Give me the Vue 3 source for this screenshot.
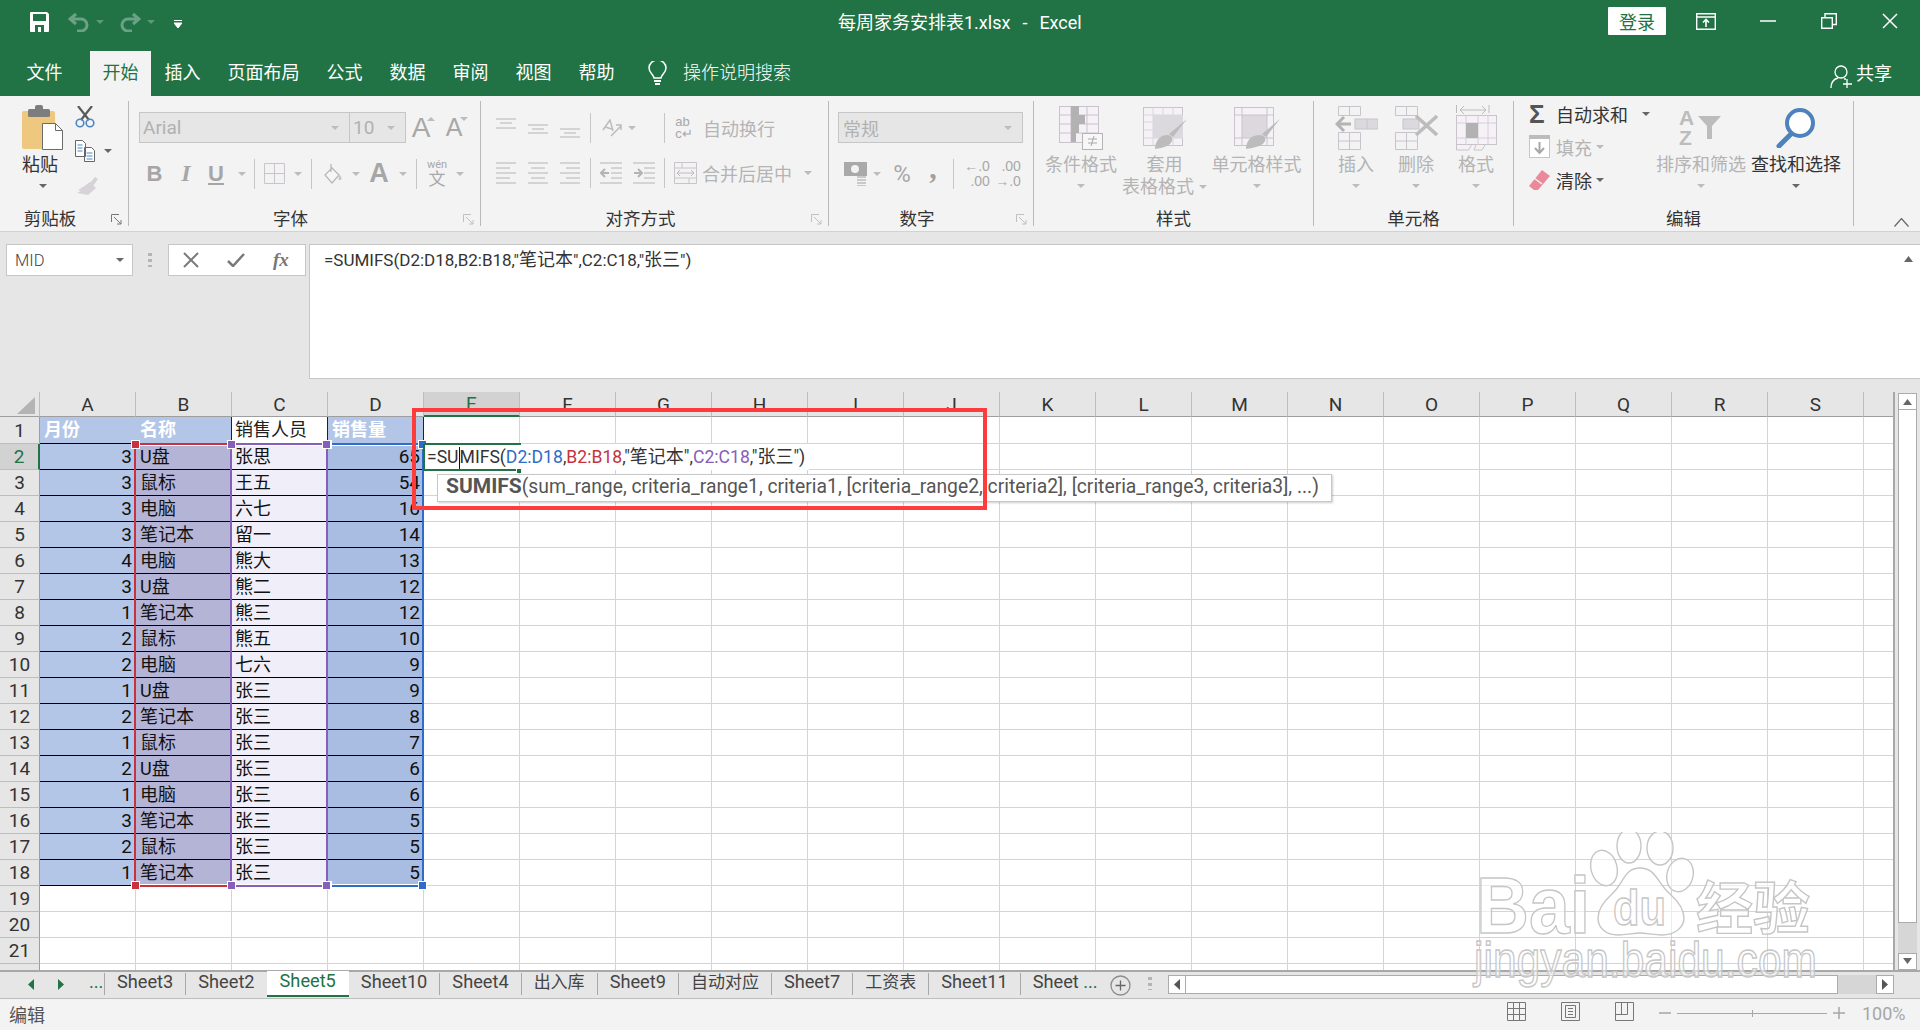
<script setup>
const colNames = 'ABCDEFGHIJKLMNOPQRS'.split('').concat('')
const rowCount = 22

const data = [
  [3, 'U盘', '张思', 65], [3, '鼠标', '王五', 54], [3, '电脑', '六七', 16], [3, '笔记本', '留一', 14],
  [4, '电脑', '熊大', 13], [3, 'U盘', '熊二', 12], [1, '笔记本', '熊三', 12], [2, '鼠标', '熊五', 10],
  [2, '电脑', '七六', 9], [1, 'U盘', '张三', 9], [2, '笔记本', '张三', 8], [1, '鼠标', '张三', 7],
  [2, 'U盘', '张三', 6], [1, '电脑', '张三', 6], [3, '笔记本', '张三', 5], [2, '鼠标', '张三', 5],
  [1, '笔记本', '张三', 5]
]
const head = ['月份', '名称', '销售人员', '销售量']

function cellText(r, c) {
  if (c > 3 || r > 18) return ''
  return r === 1 ? head[c] : data[r - 2][c]
}
function cellClass(r, c) {
  if (c > 3 || r > 18) return 'cell'
  if (r === 1) return ['cell', 'hd', 'hd' + c]
  return ['cell', 'd', 'd' + c]
}

const tabs = ['Sheet3', 'Sheet2', 'Sheet5', 'Sheet10', 'Sheet4', '出入库', 'Sheet9', '自动对应', 'Sheet7', '工资表', 'Sheet11']
const menu = ['开始', '插入', '页面布局', '公式', '数据', '审阅', '视图', '帮助']
</script>

<template>
  <div class="app">
    <!-- title bar -->
    <div class="titlebar">
      <div class="qat">
        <svg width="20" height="20" viewBox="0 0 20 20"><path d="M1 0h16l2 2v17a1 1 0 0 1-1 1H1a1 1 0 0 1-1-1V1a1 1 0 0 1 1-1z" fill="#fff"/><rect x="3" y="2" width="13" height="7" fill="#217346"/><rect x="5" y="13" width="9" height="7" fill="#217346"/><rect x="8" y="15" width="3" height="5" fill="#fff"/></svg>
        <svg class="undo" width="22" height="20" viewBox="0 0 22 20"><path d="M8 2 2 7l6 5M2 7h11a6 6 0 0 1 0 12H9" fill="none" stroke="#6ba285" stroke-width="3"/></svg>
        <i class="dd faded"></i>
        <svg class="redo" width="22" height="20" viewBox="0 0 22 20"><path d="m14 2 6 5-6 5M20 7H9a6 6 0 0 0 0 12h4" fill="none" stroke="#6ba285" stroke-width="3"/></svg>
        <i class="dd faded"></i>
        <svg class="custom" width="8" height="9" viewBox="0 0 8 9"><path d="M0 .5h8M0 3h8L4 8z" fill="#fff" stroke="#fff" stroke-width="1"/></svg>
      </div>
      <div class="doc-title">每周家务安排表1.xlsx<span class="dash">-</span>Excel</div>
      <div class="win">
        <button class="login">登录</button>
        <svg class="w-display" width="20" height="17" viewBox="0 0 20 17"><path d="M.7.7h18.6v15.6H.7zM1 4h18" fill="none" stroke="#fff" stroke-width="1.4"/><path d="M10 14V7M7 9.5 10 6.500l3 3" fill="none" stroke="#fff" stroke-width="1.6"/></svg>
        <svg class="w-min" width="16" height="2" viewBox="0 0 16 2"><path d="M0 1h16" stroke="#fff" stroke-width="1.5"/></svg>
        <svg class="w-max" width="16" height="16" viewBox="0 0 16 16"><path d="M.7 4.700h10.600v10.600H.7zM4 4.500V.7h11.300v10.800H11.500" fill="none" stroke="#fff" stroke-width="1.400"/></svg>
        <svg class="w-close" width="16" height="16" viewBox="0 0 16 16"><path d="m1 1 14 14M15 1 1 15" stroke="#fff" stroke-width="1.500"/></svg>
      </div>
    </div>

    <!-- menu tabs -->
    <div class="menubar">
      <span class="mtab file">文件</span>
      <span v-for="(m, i) in menu" :key="m" class="mtab" :class="{ active: i === 0 }">{{ m }}</span>
      <svg class="bulb" width="19" height="24" viewBox="0 0 19 24"><path d="M6 17c0-3-5-5-5-10a8.500 8 0 0 1 17 0c0 5-5 7-5 10z" fill="none" stroke="#fff" stroke-width="1.500"/><path d="M6 20h7M7 23h5" stroke="#fff" stroke-width="2"/></svg>
      <span class="tell">操作说明搜索</span>
      <span class="share">
        <svg width="24" height="24" viewBox="0 0 24 24"><circle cx="11" cy="7" r="6" fill="none" stroke="#fff" stroke-width="1.300"/><path d="M1 23c0-6 3-9 7-10M14 14h2M17 14v9M13 19h9" fill="none" stroke="#fff" stroke-width="1.300"/></svg>
        共享
      </span>
    </div>

    <!-- ribbon -->
    <div class="ribbon">
      <section class="group" style="width: 129px">
        <div class="g-body clip">
          <div class="big" style="width: 60px">
            <div class="big-ico">
              <svg width="42" height="45" viewBox="0 0 42 45"><rect y="6" width="33" height="38" rx="2" fill="#edc87e"/><rect x="6" y="4" width="22" height="8" rx="1.500" fill="#7d7d7d"/><rect x="13" y="0" width="8" height="6" rx="2" fill="#7d7d7d"/><path d="M20.500 18.500h13l7 7v19h-20z" fill="#fff" stroke="#6b6b6b"/><path d="M33.500 18.500v7h7" fill="none" stroke="#6b6b6b"/></svg>
            </div>
            <span class="dark paste-l">粘贴</span>
            <i class="dd"></i>
          </div>
          <div class="clip-tools">
            <svg width="20" height="22" viewBox="0 0 20 22"><path d="M3 0 14 14M17 0 6 14" stroke="#5a5a5a" stroke-width="2.200"/><circle cx="5" cy="17" r="3.800" fill="none" stroke="#4a86c5" stroke-width="1.600"/><circle cx="15" cy="17" r="3.800" fill="none" stroke="#4a86c5" stroke-width="1.600"/></svg>
            <div class="copy-row">
              <svg width="20" height="22" viewBox="0 0 20 22"><path d="M.5.500h7l3 3v13H.5zM9.500 7.500h7l3 3v11h-10z" fill="#fff" stroke="#666"/><path d="M2.500 5h5M2.500 8h5M2.500 11h5M11.500 13h6M11.500 16h6M11.500 19h6" stroke="#4a86c5"/></svg>
              <i class="dd"></i>
            </div>
            <svg width="24" height="21" viewBox="0 0 24 21"><path d="m15 9 5-6 3 2-5 7zM15 8l6 6-8 7-11-2 4-2-3-1 5-3z" fill="#d6d2d8"/></svg>
          </div>
        </div>
        <div class="g-foot"><span class="g-label">剪贴板</span><span class="launch"><svg width="11" height="11" viewBox="0 0 11 11"><path d="M.5 8V.5H8M3 3l7 7M10 6v4H6" fill="none" stroke="#777"/></svg></span></div>
      </section>

      <section class="group" style="width: 352px">
        <div class="g-body font">
          <div class="f-row1">
            <div class="combo" style="width: 211px"><span>Arial</span><i class="dd light"></i></div>
            <div class="combo nl" style="width: 56px"><span>10</span><i class="dd light"></i></div>
            <span class="grow up">A<i class="dd up-t"></i></span>
            <span class="grow down">A<i class="dd light"></i></span>
          </div>
          <div class="irow f-row2">
            <b class="gl">B</b>
            <i class="gl ser">I</i>
            <u class="gl">U</u>
            <i class="dd light"></i>
            <i class="sep"></i>
            <svg width="21" height="21" viewBox="0 0 21 21"><path d="M.5.500h20v20H.5zM10.500.500v20M.5 10.500h20" fill="none" stroke="#c9c4cc"/></svg>
            <i class="dd light"></i>
            <i class="sep"></i>
            <svg width="19" height="22" viewBox="0 0 19 22"><path d="M8 5 1 12l7 8 7-8zM7 1v8" fill="#f6f6f6" stroke="#b8b8b8" stroke-width="1.300"/><path d="M16 12c2 3 2 5 0 5s-2-2 0-5z" fill="#c9c4cc"/></svg>
            <i class="dd light"></i>
            <span class="gl big-a">A</span>
            <i class="dd light"></i>
            <i class="sep"></i>
            <span class="wen"><small>wén</small><span>文</span></span>
            <i class="dd light"></i>
          </div>
        </div>
        <div class="g-foot"><span class="g-label">字体</span><span class="launch"><svg width="11" height="11" viewBox="0 0 11 11"><path d="M.5 8V.5H8M3 3l7 7M10 6v4H6" fill="none" stroke="#c0c0c0"/></svg></span></div>
      </section>

      <section class="group" style="width: 348px">
        <div class="g-body align">
          <div class="irow a-row1">
            <svg width="20" height="22" viewBox="0 0 20 22"><path d="M0 2h20M4 6h12M0 11h20" stroke="#b4b4b4"/></svg>
            <svg width="20" height="22" viewBox="0 0 20 22"><path d="M0 8h20M4 12h12M0 16h20" stroke="#b4b4b4"/></svg>
            <svg width="20" height="22" viewBox="0 0 20 22"><path d="M0 12h20M4 16h12M0 20h20" stroke="#b4b4b4"/></svg>
            <i class="sep"></i>
            <svg width="21" height="18" viewBox="0 0 21 18"><path d="M2 11 9 1l3 11M4 8l7 2M10 17 20 7M15 6h5v5" fill="none" stroke="#bcbcbc" stroke-width="1.500"/></svg>
            <i class="dd light"></i>
            <i></i>
            <i class="sep"></i>
            <span class="abc">ab<br>c↵</span>
            <span class="off txt">自动换行</span>
          </div>
          <div class="irow a-row2">
            <svg width="20" height="22" viewBox="0 0 20 22"><path d="M0 1h20M0 6h14M0 11h20M0 16h14M0 21h20" stroke="#b4b4b4"/></svg>
            <svg width="20" height="22" viewBox="0 0 20 22"><path d="M0 1h20M3 6h14M0 11h20M3 16h14M0 21h20" stroke="#b4b4b4"/></svg>
            <svg width="20" height="22" viewBox="0 0 20 22"><path d="M0 1h20M6 6h14M0 11h20M6 16h14M0 21h20" stroke="#b4b4b4"/></svg>
            <i class="sep"></i>
            <svg width="22" height="22" viewBox="0 0 22 22"><path d="M0 1h22M11 6h11M11 11h11M11 16h11M0 21h22" stroke="#b4b4b4"/><path d="M1 11h8M5 7l-4 4 4 4" fill="none" stroke="#b4b4b4" stroke-width="2"/></svg>
            <svg width="22" height="22" viewBox="0 0 22 22"><path d="M0 1h22M11 6h11M11 11h11M11 16h11M0 21h22" stroke="#b4b4b4"/><path d="M1 11h8M5 7l4 4-4 4" fill="none" stroke="#b4b4b4" stroke-width="2"/></svg>
            <i class="sep"></i>
            <svg width="23" height="22" viewBox="0 0 23 22"><path d="M.5.500h22v21H.5zM.5 6h22M.5 16h22M8 .5V6M15 16v5.500" fill="none" stroke="#c9c4cc"/><path d="M3 11h17M6 8l-3 3 3 3M17 8l3 3-3 3" fill="none" stroke="#bcbcbc"/></svg>
            <span class="off txt">合并后居中</span>
            <i class="dd light"></i>
          </div>
        </div>
        <div class="g-foot"><span class="g-label">对齐方式</span><span class="launch"><svg width="11" height="11" viewBox="0 0 11 11"><path d="M.5 8V.5H8M3 3l7 7M10 6v4H6" fill="none" stroke="#c0c0c0"/></svg></span></div>
      </section>

      <section class="group" style="width: 205px">
        <div class="g-body number">
          <div class="combo wide" style="width: 185px"><span class="cjk-t">常规</span><i class="dd light"></i></div>
          <div class="irow n-row2">
            <svg width="23" height="24" viewBox="0 0 23 24"><rect width="23" height="14" fill="#a9a9a9"/><circle cx="11" cy="7" r="4" fill="#f3f3f3"/><path d="M13 15h9M13 18h9M13 21h9M13 24h9" stroke="#c9c9c9" stroke-width="2"/></svg>
            <i class="dd light"></i>
            <span class="pct">%</span>
            <span class="comma">,</span>
            <i class="sep"></i>
            <span class="dec">←.0<br>.00</span>
            <span class="dec">.00<br>→.0</span>
          </div>
        </div>
        <div class="g-foot"><span class="g-label">数字</span><span class="launch"><svg width="11" height="11" viewBox="0 0 11 11"><path d="M.5 8V.5H8M3 3l7 7M10 6v4H6" fill="none" stroke="#c0c0c0"/></svg></span></div>
      </section>

      <section class="group" style="width: 280px">
        <div class="g-body styles">
          <div class="big" style="width: 72px">
            <div class="big-ico">
              <svg width="44" height="44" viewBox="0 0 44 44"><rect x=".5" y=".5" width="39" height="36" fill="#f5f1f7" stroke="#c9c4cc"/><path d="M.5 9h39M.5 18h39M.5 27h39M12 .5v36M28 .5v36" stroke="#c9c4cc"/><path d="M12 0h8v9h6v9h-6v9h-3v9h-5z" fill="#b2b2b2"/><rect x="23.500" y="27.500" width="20" height="16" fill="#f7f7f7" stroke="#b4b4b4"/><path d="M29 37h9M29 33h9M35 30l-3 10" stroke="#a9a9a9"/></svg>
            </div>
            <span class="off">条件格式</span>
            <i class="dd light"></i>
          </div>
          <div class="big" style="width: 87px; margin-left: 4px">
            <div class="big-ico">
              <svg width="44" height="42" viewBox="0 0 44 42"><rect x=".5" y=".5" width="39" height="38" fill="#f5f1f7" stroke="#c9c4cc"/><path d="M.5 8h39M.5 15h39M.5 23h39M.5 31h39M10 .5v38M20 .5v38M30 .5v38" stroke="#d9d5dc"/><rect x="10" y="8" width="30" height="23" fill="#dcd9de"/><path d="m44 12-14 18-4-3z" fill="#bcbcbc"/><path d="M12 42c0-8 5-14 12-14 4 0 6 3 5 6-2 5-9 7-17 8z" fill="#bcbcbc"/></svg>
            </div>
            <span class="off">套用</span>
            <span class="off tight">表格格式<i class="dd light"></i></span>
          </div>
          <div class="big" style="width: 91px; margin-left: 3px">
            <div class="big-ico">
              <svg width="46" height="42" viewBox="0 0 46 42"><rect x=".5" y=".5" width="39" height="38" fill="#f5f1f7" stroke="#c9c4cc"/><rect x="8" y="8" width="25" height="23" fill="#dcd9de"/><path d="M.5 8h39M.5 31h39M8 .5v38M33 .5v38" stroke="#c9c4cc"/><path d="m46 12-14 18-4-3z" fill="#bcbcbc"/><path d="M12 42c0-8 5-14 14-14 4 0 6 3 5 6-2 5-11 7-19 8z" fill="#bcbcbc"/></svg>
            </div>
            <span class="off">单元格样式</span>
            <i class="dd light"></i>
          </div>
        </div>
        <div class="g-foot solo"><span class="g-label">样式</span></div>
      </section>

      <section class="group" style="width: 200px">
        <div class="g-body cells">
          <div class="big" style="width: 60px">
            <div class="big-ico">
              <svg width="43" height="44" viewBox="0 0 43 44"><path d="M3.500.5h22v9h-22zM14.500.5v9M3.500 26.500h22v17h-22zM14.500 26.500v17M3.500 35h22" fill="none" stroke="#c9c4cc"/><rect x="20" y="13" width="23" height="10" fill="#dcd9de" stroke="#c9c4cc"/><path d="M32 13v10" stroke="#c9c4cc"/><path d="M16 18H3M9 11l-7 7 7 7" fill="none" stroke="#b4b4b4" stroke-width="3"/></svg>
            </div>
            <span class="off">插入</span>
            <i class="dd light"></i>
          </div>
          <div class="big" style="width: 60px">
            <div class="big-ico">
              <svg width="43" height="44" viewBox="0 0 43 44"><path d="M.5.500h22v9H.5zM11.500.5v9M.5 26.500h22v17H.5zM11.500 26.500v17M.5 35h22" fill="none" stroke="#c9c4cc"/><rect x="8" y="13" width="16" height="10" fill="#dcd9de" stroke="#c9c4cc"/><path d="m21 10 21 19M42 10 21 29" fill="none" stroke="#bcbcbc" stroke-width="3.500"/></svg>
            </div>
            <span class="off">删除</span>
            <i class="dd light"></i>
          </div>
          <div class="big" style="width: 60px">
            <div class="big-ico">
              <svg width="41" height="46" viewBox="0 0 41 46"><path d="M.5 0v8M33 0v8M4 5h26M8 1 4 5l4 4M26 1l4 4-4 4" fill="none" stroke="#bcbcbc"/><rect x=".5" y="10.500" width="40" height="29" fill="#f5f1f7" stroke="#c9c4cc"/><path d="M.5 18h40M.5 33h40M10 10.500v29M22 10.500v29M32 10.500v29" stroke="#d5d0d8"/><rect x="10" y="18" width="12" height="15" fill="#b2b2b2"/><path d="M.5 40v5h12l3-5M20 40l-2 5h8l3-5" fill="none" stroke="#c9c4cc"/></svg>
            </div>
            <span class="off">格式</span>
            <i class="dd light"></i>
          </div>
        </div>
        <div class="g-foot solo"><span class="g-label">单元格</span></div>
      </section>

      <section class="group" style="width: 340px">
        <div class="g-body edit">
          <div class="stack">
            <div class="srow">
              <span class="sigma">Σ</span><span class="dark">自动求和</span><i class="dd first"></i>
            </div>
            <div class="srow">
              <svg width="21" height="23" viewBox="0 0 21 23"><rect x=".5" y=".5" width="20" height="22" fill="#fff" stroke="#c6c6c6"/><rect width="21" height="4" fill="#bcbcbc"/><path d="M10.500 7v11M6 13l4.500 5 4.500-5" fill="none" stroke="#a8a8a8" stroke-width="2"/></svg>
              <span class="off">填充</span><i class="dd light"></i>
            </div>
            <div class="srow">
              <svg width="21" height="20" viewBox="0 0 21 20"><path d="M13 0l8 6L9 20H5l-5-4z" fill="#e98a9b"/><path d="m5 8 8 6" stroke="#f3f3f3" stroke-width="1.500"/></svg>
              <span class="dark">清除</span><i class="dd"></i>
            </div>
          </div>
          <div class="big" style="width: 92px">
            <div class="big-ico sort-ico">
              <span class="az">A<br>Z</span>
              <svg width="23" height="23" viewBox="0 0 23 23"><path d="M0 0h23l-9 10v13H9V10z" fill="#bcbcbc"/></svg>
            </div>
            <span class="off">排序和筛选</span>
            <i class="dd light"></i>
          </div>
          <div class="big" style="width: 92px; margin-left: 3px">
            <div class="big-ico">
              <svg width="40" height="40" viewBox="0 0 40 40"><circle cx="24" cy="15" r="13" fill="#fff" stroke="#4d82bd" stroke-width="4"/><path d="m15 26-12 12" stroke="#4d82bd" stroke-width="5" stroke-linecap="round"/></svg>
            </div>
            <span class="dark">查找和选择</span>
            <i class="dd"></i>
          </div>
        </div>
        <div class="g-foot solo"><span class="g-label">编辑</span></div>
      </section>

      <svg class="collapse" width="15" height="9" viewBox="0 0 15 9"><path d="m.5 8.500 7-8 7 8" fill="none" stroke="#666" stroke-width="1.200"/></svg>
    </div>

    <!-- formula bar -->
    <div class="formulabar">
      <div class="namebox"><span>MID</span><i class="dd"></i></div>
      <div class="grip"></div>
      <div class="fx-buttons">
        <svg width="16" height="16" viewBox="0 0 16 16"><path d="m1 1 14 14M15 1 1 15" stroke="#7a7a7a" stroke-width="2"/></svg>
        <svg width="18" height="14" viewBox="0 0 18 14"><path d="m1 8 5 5L17 1" fill="none" stroke="#7a7a7a" stroke-width="2.500"/></svg>
        <span class="fx">fx</span>
      </div>
      <div class="fx-input">
        <span class="fx-text">=SUMIFS(D2:D18,B2:B18,"<span class="c">笔记本</span>",C2:C18,"<span class="c">张三</span>")</span>
        <svg class="fx-up" width="9" height="6" viewBox="0 0 9 6"><path d="M0 6 4.500 0 9 6z" fill="#666"/></svg>
      </div>
    </div>

    <!-- sheet -->
    <div class="main">
      <div class="sheet">
        <div class="grid">
          <div class="corner"><svg width="18" height="17" viewBox="0 0 18 17"><path d="M18 0v17H0z" fill="#b4b4b4"/></svg></div>
          <div v-for="(c, i) in colNames" :key="'h' + i" class="colh" :class="{ sel: c === 'E' }">{{ c }}</div>
          <template v-for="r in rowCount" :key="r">
            <div class="rowh" :class="{ sel: r === 2 }">{{ r < 22 ? r : '' }}</div>
            <div v-for="(c, i) in colNames" :key="i" :class="cellClass(r, i)">{{ cellText(r, i) }}</div>
          </template>
        </div>

        <div class="range blue"><i class="h tl"></i><i class="h tr"></i><i class="h bl"></i><i class="h br"></i></div>
        <div class="range red"><i class="h tl"></i><i class="h bl"></i></div>
        <div class="range purple"><i class="h tl"></i><i class="h tr"></i><i class="h bl"></i><i class="h br"></i></div>

        <div class="edit-cell">
          <span class="edit-text">=SU<i class="cursor"></i>MIFS(<span class="t-b">D2:D18</span>,<span class="t-r">B2:B18</span>,"<span class="c">笔记本</span>",<span class="t-p">C2:C18</span>,"<span class="c">张三</span>")</span>
        </div>
        <div class="edit-top"></div>
        <div class="edit-bottom"></div>

        <div class="tip"><b>SUMIFS</b>(sum_range, criteria_range1, criteria1, [criteria_range2, criteria2], [criteria_range3, criteria3], ...)</div>
        <div class="annot"></div>
      </div>

      <div class="vscroll">
        <div class="sbtn"><svg width="9" height="6" viewBox="0 0 9 6"><path d="M0 6 4.500 0 9 6z" fill="#666"/></svg></div>
        <div class="vthumb"></div>
        <div class="vtrack"></div>
        <div class="sbtn"><svg width="9" height="6" viewBox="0 0 9 6"><path d="M0 0 4.500 6 9 0z" fill="#666"/></svg></div>
      </div>
    </div>

    <!-- sheet tabs -->
    <div class="tabbar">
      <div class="tnav">
        <svg width="6" height="11" viewBox="0 0 6 11"><path d="M6 0v11L0 5.500z" fill="#217346"/></svg>
        <svg width="6" height="11" viewBox="0 0 6 11"><path d="M0 0v11l6-5.500z" fill="#217346"/></svg>
        <span>...</span>
      </div>
      <div v-for="t in tabs" :key="t" class="stab" :class="{ on: t === 'Sheet5', cn: !t.startsWith('Sheet') }"><span>{{ t }}</span></div>
      <div class="stab last"><span>Sheet</span> <em>...</em></div>
      <svg class="addtab" width="21" height="21" viewBox="0 0 21 21"><circle cx="10.500" cy="10.500" r="9.500" fill="none" stroke="#8c8c8c" stroke-width="1.300"/><path d="M10.500 5.500v10M5.500 10.500h10" stroke="#666" stroke-width="1.300"/></svg>
      <div class="grip small"></div>
      <div class="hscroll">
        <div class="hbtn"><svg width="6" height="11" viewBox="0 0 6 11"><path d="M6 0v11L0 5.500z" fill="#555"/></svg></div>
        <div class="hthumb"></div>
        <div class="htrack"></div>
        <div class="hbtn"><svg width="6" height="11" viewBox="0 0 6 11"><path d="M0 0v11l6-5.500z" fill="#555"/></svg></div>
      </div>
    </div>

    <!-- status bar -->
    <div class="statusbar">
      <span class="mode">编辑</span>
      <div class="views">
        <svg width="19" height="19" viewBox="0 0 19 19"><path d="M.5.500h18v18H.5zM6.500.5v18M12.500.5v18M.5 6.500h18M.5 12.500h18" fill="none" stroke="#777"/></svg>
        <svg width="19" height="19" viewBox="0 0 19 19"><path d="M.5.500h18v18H.5zM4.500 3.500h10v12h-10zM7 6.500h5M7 9.500h5M7 12.500h5" fill="none" stroke="#777"/></svg>
        <svg width="19" height="19" viewBox="0 0 19 19"><path d="M.5.500h18v18H.5zM.5 12.500h12V.5M6.500.5v12" fill="none" stroke="#777"/></svg>
      </div>
      <div class="zoom">
        <svg width="12" height="2" viewBox="0 0 12 2"><path d="M0 1h12" stroke="#a6a6a6" stroke-width="1.500"/></svg>
        <div class="slider"><i></i></div>
        <svg width="12" height="12" viewBox="0 0 12 12"><path d="M0 6h12M6 0v12" stroke="#a6a6a6" stroke-width="1.500"/></svg>
        <span>100%</span>
      </div>
    </div>

    <!-- watermark -->
    <svg class="watermark" width="360" height="160" viewBox="1465 832 360 160">
      <g fill="#fff" fill-opacity=".55" stroke="#c6c6c6" stroke-width="1.400">
        <ellipse cx="1604" cy="868" rx="13" ry="18" transform="rotate(-15 1604 868)"/>
        <ellipse cx="1629" cy="846" rx="12" ry="17"/>
        <ellipse cx="1660" cy="848" rx="13" ry="17"/>
        <ellipse cx="1680" cy="875" rx="13" ry="17" transform="rotate(15 1680 875)"/>
        <path d="M1640 868c-16 0-16 15-28 26-10 9-14 16-14 24 0 10 8 17 20 17 9 0 15-2 22-2s13 2 22 2c12 0 22-7 22-17 0-8-4-15-14-24-13-11-14-26-30-26z"/>
        <text x="1476" y="933" font-size="80" font-weight="700" textLength="114" lengthAdjust="spacingAndGlyphs" class="wm">Bai</text>
        <text x="1613" y="925" font-size="50" font-weight="700" textLength="53" lengthAdjust="spacingAndGlyphs" class="wm">du</text>
        <text x="1696" y="929" font-size="57" font-weight="700" class="wm-c">经验</text>
        <text x="1474" y="977" font-size="50" textLength="343" lengthAdjust="spacingAndGlyphs" class="wm">jingyan.baidu.com</text>
      </g>
    </svg>
  </div>
</template>

<style>
html, body {
  margin: 0;
  background: #fff;
}
</style>

<style scoped>
.app {
  position: relative;
  width: 1920px;
  height: 1030px;
  overflow: hidden;
  font-family: Roboto, "Noto Sans CJK SC", sans-serif;
  color: #333;
  display: flex;
  flex-direction: column;
  background: #e6e6e6;
}
.app i, .app em { font-style: normal; }

/* dropdown triangle used all over the ribbon */
.dd {
  display: inline-block;
  width: 0;
  height: 0;
  border-left: 4px solid transparent;
  border-right: 4px solid transparent;
  border-top: 4px solid #666;
}
.dd.light { border-top-color: #bcbcbc; }
.dd.faded { border-top-color: #5d9a7a; }

.titlebar {
  height: 51px;
  background: #217346;
  display: flex;
  align-items: flex-start;
  flex: none;
}
.qat {
  width: 640px;
  display: flex;
  align-items: center;
  padding: 12px 0 0 30px;
  box-sizing: border-box;
}
.undo { margin-left: 18px; }
.qat .dd { margin: 0 0 0 6px; }
.redo { margin-left: 15px; }
.custom { margin-left: 19px; margin-top: 5px; }
.doc-title {
  width: 640px;
  padding: 10px 0 0 198px;
  box-sizing: border-box;
  color: #fff;
  font-size: 18px;
  line-height: 26px;
  white-space: nowrap;
}
.dash { margin: 0 12px; }
.win {
  display: flex;
  align-items: center;
  flex: 1;
  padding-top: 7px;
}
.login {
  margin-left: 328px;
  width: 58px;
  height: 28px;
  border: 0;
  border-radius: 1px;
  background: #fff;
  color: #217346;
  font: 18px "Noto Sans CJK SC", sans-serif;
  padding: 0;
}
.w-display { margin-left: 30px; }
.w-min { margin-left: 44px; margin-top: -1px; }
.w-max { margin-left: 45px; }
.w-close { margin-left: 45px; }

.menubar {
  height: 45px;
  background: #217346;
  display: flex;
  align-items: stretch;
  padding-left: 13px;
  flex: none;
  color: #fff;
  font-size: 18px;
}
.mtab {
  padding: 0 13.5px;
  line-height: 44px;
  white-space: nowrap;
}
.mtab.file { margin-right: 13px; }
.mtab.active {
  background: #f3f3f3;
  color: #217346;
  padding: 0 12.5px;
  margin-left: 1px;
}
.bulb { margin: 10px 0 0 20px; }
.tell { margin-left: 16px; line-height: 44px; font-weight: 300; }
.share {
  margin-left: auto;
  padding-right: 28px;
  display: flex;
  align-items: center;
  gap: 2px;
  line-height: 44px;
}
.share svg { margin-top: 6px; }

.ribbon {
  height: 136px;
  background: #f3f3f3;
  border-bottom: 1px solid #d2d2d2;
  box-sizing: border-box;
  padding-top: 5px;
  display: flex;
  flex: none;
  position: relative;
  font-size: 18px;
}
.group {
  height: 125px;
  box-sizing: border-box;
  border-right: 1px solid #b9b9b9;
  display: flex;
  flex-direction: column;
  flex: none;
}
.g-body { height: 105px; flex: none; display: flex; }
.g-foot { height: 20px; flex: none; display: flex; align-items: flex-start; }
.g-label {
  flex: 1;
  text-align: center;
  font-size: 17.500px;
  line-height: 22px;
  margin-top: 2px;
  color: #333;
}
.launch {
  width: 28px;
  display: flex;
  justify-content: flex-end;
  padding: 8px 6px 0 0;
  box-sizing: border-box;
}
.dark { color: #333; }
.off { color: #b4b4b4; }
.big {
  display: flex;
  flex-direction: column;
  align-items: center;
  line-height: 22px;
  white-space: nowrap;
  flex: none;
}
.big-ico {
  height: 53px;
  display: flex;
  align-items: center;
}
.big .dd { margin-top: 8px; }
.tight { display: flex; align-items: center; gap: 5px; }
.tight .dd { margin-top: 0; }
.paste-l { margin-right: 6px; }

.clip { padding-left: 13px; }
.clip-tools {
  display: flex;
  flex-direction: column;
  padding: 5px 0 0 2px;
  gap: 12px;
}
.copy-row { display: flex; align-items: center; gap: 9px; }

.combo {
  height: 31px;
  box-sizing: border-box;
  border: 1.500px solid #c6c6c6;
  background: #e6e6e6;
  color: #b1b1b1;
  font-size: 19px;
  display: flex;
  align-items: center;
  justify-content: space-between;
  padding: 0 10px 0 3px;
  flex: none;
}
.combo.nl { border-left: 0; }
.font, .align, .number { flex-direction: column; }
.font { padding-left: 10px; }
.f-row1 { display: flex; margin-top: 11px; }
.grow {
  position: relative;
  color: #a8a8a8;
  font-size: 28px;
  line-height: 31px;
  font-family: "Liberation Sans", sans-serif;
  margin-left: 3px;
  width: 24px;
  text-align: center;
}
.grow.down { margin-left: 9px; font-size: 25px; }
.grow .dd { position: absolute; top: 5px; right: -2px; }
.grow .up-t { border-top: 0; border-bottom: 4px solid #bcbcbc; }

.irow {
  display: grid;
  align-items: center;
  justify-items: center;
  height: 31px;
}
.f-row2 {
  margin: 15px 0 0 -1px;
  grid-template-columns: 33px 30px 30px 22px 3px 36px 12px 14px 30px 15px 32px 16px 11px 30px 16px;
  justify-content: start;
}
.sep {
  display: block;
  width: 1px;
  height: 30px;
  background: #c6c6c6;
}
.gl {
  color: #a6a6a6;
  font: 700 22px "Liberation Sans", sans-serif;
}
.gl.ser { font: italic 700 24px "Liberation Serif", serif; }
.big-a { font-size: 27px; }
.wen {
  color: #a8a8a8;
  font-size: 17px;
  line-height: 17px;
  display: flex;
  flex-direction: column;
  align-items: center;
}
.wen small { font-size: 11px; line-height: 12px; }

.align { padding-left: 9px; }
.a-row1 {
  margin-top: 11px;
  grid-template-columns: 32px 32px 32px 8px 34px 8px 24px 9px 30px auto;
  justify-content: start;
}
.a-row1 .txt { margin-left: 4px; }
.a-row2 {
  margin-top: 14px;
  grid-template-columns: 32px 32px 32px 8px 34px 32px 9px 33px 90px 32px;
  justify-content: start;
}
.txt { white-space: nowrap; }
.abc {
  color: #a8a8a8;
  font: 13px/12px "Liberation Sans", sans-serif;
}

.number { padding-left: 9px; }
.number .combo { margin-top: 11px; padding-left: 4px; }
.cjk-t { font-size: 18px; }
.n-row2 {
  margin-top: 15px;
  grid-template-columns: 31px 12px 38px 24px 16px 32px 30px;
  justify-content: start;
  padding-left: 2px;
}
.pct { color: #a8a8a8; font-size: 24px; }
.comma { color: #a0a0a0; font: 700 30px/20px "Liberation Serif", serif; margin-top: -12px; }
.dec {
  color: #a8a8a8;
  font: 14px/15px "Liberation Sans", sans-serif;
  text-align: right;
}

.styles { padding-left: 11px; }
.cells { padding-left: 12px; }
.edit { padding-left: 15px; }
.stack { width: 126px; flex: none; margin-top: -4px; }
.srow {
  height: 33px;
  display: flex;
  align-items: center;
  gap: 6px;
  white-space: nowrap;
}
.srow .dd { margin-left: -2px; }
.srow .dd.first { margin-left: 8px; }
.sigma {
  width: 19px;
  margin-right: 2px;
  color: #555;
  font: 700 26px/26px "Liberation Sans", sans-serif;
}
.sort-ico { gap: 4px; padding-right: 2px; }
.az {
  color: #bcbcbc;
  font: 700 21px/20px "Liberation Sans", sans-serif;
}
.collapse { position: absolute; right: 11px; top: 122px; }

.formulabar {
  height: 160px;
  flex: none;
  background: #e6e6e6;
  display: flex;
  align-items: flex-start;
  padding: 12px 0 0 6px;
  box-sizing: border-box;
}
.namebox {
  width: 127px;
  height: 32px;
  box-sizing: border-box;
  border: 1px solid #c6c6c6;
  background: #fff;
  display: flex;
  align-items: center;
  justify-content: space-between;
  padding: 0 8px;
  font-size: 16.500px;
  color: #444;
  font-weight: 300;
}
.grip {
  width: 4px;
  height: 14px;
  margin: 9px 16px 0 15px;
  background: repeating-linear-gradient(#b4b4b4 0 3px, transparent 3px 6px);
}
.fx-buttons {
  width: 138px;
  height: 32px;
  box-sizing: border-box;
  border: 1px solid #c6c6c6;
  background: #fff;
  display: flex;
  align-items: center;
  gap: 28px;
  padding-left: 14px;
}
.fx {
  color: #777;
  font: italic 700 19px "Liberation Serif", serif;
}
.fx-input {
  margin-left: 3px;
  flex: 1;
  height: 135px;
  box-sizing: border-box;
  border: 1px solid #c6c6c6;
  border-right: 0;
  background: #fff;
  padding: 0 0 0 14px;
  display: flex;
  justify-content: space-between;
  line-height: 29px;
  font-size: 17px;
  color: #333;
}
.c { font-size: 18px; }
.fx-up { margin: 11px 7px 0 0; }

.main {
  height: 577.500px;
  display: flex;
  flex: none;
}
.sheet {
  position: relative;
  width: 1895px;
  overflow: hidden;
  background: #fff;
  border-right: 2px solid #a8a8a8;
  box-sizing: border-box;
}
.grid {
  display: grid;
  grid-template-columns: 40px repeat(19, 96px) 30px;
  grid-template-rows: 25px 27px repeat(21, 26px);
  font-size: 18px;
}
.corner {
  background: #e6e6e6;
  border-bottom: 1px solid #9e9e9e;
  border-right: 1px solid #bdbdbd;
  box-sizing: border-box;
  padding: 5px 0 0 17px;
}
.colh, .rowh {
  background: #e6e6e6;
  box-sizing: border-box;
  display: flex;
  align-items: center;
  justify-content: center;
  color: #333;
  font-size: 19px;
}
.colh {
  border-right: 1px solid #bdbdbd;
  border-bottom: 1px solid #9e9e9e;
}
.rowh {
  border-bottom: 1px solid #bdbdbd;
  border-right: 1px solid #9e9e9e;
}
.colh.sel {
  background: #d2d2d2;
  color: #217346;
  border-bottom: 2px solid #217346;
}
.rowh.sel {
  background: #d2d2d2;
  color: #217346;
  border-right: 2px solid #217346;
}
.cell {
  box-sizing: border-box;
  border-right: 1px solid #d4d4d4;
  border-bottom: 1px solid #d4d4d4;
  line-height: 25px;
  padding: 0 4px;
  white-space: nowrap;
  overflow: hidden;
}
.hd { color: #fff; font-weight: 700; background: #b4c6e7; border-right-color: #b4c6e7; border-bottom-color: #000; }
.hd2 { background: #fff; color: #222; font-weight: 400; border-left: 1px solid #222; border-right-color: #222; margin-left: -1px; padding-left: 3px; }
.hd3 { border-right-color: #222; }
.d { border-bottom-color: #000; color: #111; }
.d0 { background: #b4c6e7; border-right-color: #b4c6e7; text-align: right; padding-right: 3px; font-size: 19px; }
.d1 { background: #b4b5d6; border-right-color: #b4b5d6; padding-left: 4px; }
.d2 { background: #f0eef8; border-right-color: #f0eef8; padding-left: 3px; }
.d3 { background: #a9bde3; border-right-color: #a9bde3; text-align: right; padding-right: 3px; font-size: 19px; }

.range {
  position: absolute;
  top: 51px;
  height: 444px;
  width: 98px;
  box-sizing: border-box;
  border: 2px solid;
  box-shadow: inset 0 1px #fff, inset 0 -1px #fff;
}
.red { left: 134px; border-color: #c8323c; }
.purple { left: 230px; border-color: #8660b8; }
.blue { left: 326px; border-color: #2f6cc8; }
.h {
  position: absolute;
  width: 7px;
  height: 7px;
  box-shadow: 0 0 0 1px #fff;
  background: inherit;
}
.red .h { background: #c8323c; }
.purple .h { background: #8660b8; }
.blue .h { background: #2f6cc8; }
.tl { left: -4px; top: -4px; }
.tr { right: -4px; top: -4px; }
.bl { left: -4px; bottom: -4px; }
.br { right: -4px; bottom: -4px; }

.edit-cell {
  position: absolute;
  left: 423px;
  top: 52px;
  width: 386px;
  height: 26px;
  box-sizing: border-box;
  background: #fff;
  border-left: 2px solid #217346;
  padding-left: 2px;
  line-height: 26px;
  font-size: 17.600px;
  color: #333;
  white-space: nowrap;
}
.cursor {
  display: inline-block;
  width: 1px;
  height: 22px;
  background: #111;
  vertical-align: middle;
}
.t-b { color: #2f6cc8; }
.t-r { color: #c8323c; }
.t-p { color: #8660b8; }
.edit-top {
  position: absolute;
  left: 424px;
  top: 51px;
  width: 97px;
  height: 2px;
  background: #217346;
}
.edit-bottom {
  position: absolute;
  left: 423px;
  top: 77px;
  width: 93px;
  height: 2px;
  background: #217346;
}
.edit-bottom::after {
  content: "";
  position: absolute;
  right: -5px;
  top: 0;
  width: 4px;
  height: 4px;
  background: #217346;
}
.tip {
  position: absolute;
  left: 437px;
  top: 82px;
  height: 28px;
  width: 895px;
  box-sizing: border-box;
  background: #fff;
  border: 1px solid #c8c8c8;
  box-shadow: 1px 1px 2px rgba(0, 0, 0, .2);
  padding-left: 8px;
  line-height: 22px;
  font-size: 19.300px;
  color: #555;
  white-space: nowrap;
}
.tip b { color: #555; font-size: 21px; }
.annot {
  position: absolute;
  left: 412px;
  top: 16px;
  width: 575px;
  height: 102px;
  box-sizing: border-box;
  border: 4px solid #ff3b3b;
}

.vscroll {
  flex: 1;
  background: #e6e6e6;
  display: flex;
  flex-direction: column;
  padding: 1px 3px 0 3px;
}
.sbtn {
  height: 17px;
  flex: none;
  box-sizing: border-box;
  border: 1px solid #ababab;
  background: #fff;
  display: flex;
  align-items: center;
  justify-content: center;
}
.vthumb {
  height: 513px;
  flex: none;
  box-sizing: border-box;
  border: 1px solid #ababab;
  border-top: 0;
  background: #fff;
}
.vtrack { flex: 1; background: #d6d6d6; }

.tabbar {
  height: 29px;
  flex: none;
  box-sizing: border-box;
  background: #e6e6e6;
  border-top: 2px solid #a8a8a8;
  border-bottom: 1px solid #bdbdbd;
  display: flex;
  font-size: 18.200px;
  color: #444;
}
.tnav {
  width: 104px;
  flex: none;
  display: flex;
  align-items: center;
  padding-left: 28px;
  gap: 24px;
  box-sizing: border-box;
  color: #217346;
}
.tnav span { margin-left: 1px; margin-top: -6px; }
.stab {
  flex: none;
  padding: 0 12px;
  height: 22px;
  margin-top: 1px;
  line-height: 18px;
  white-space: nowrap;
  border-left: 1px solid #a8a8a8;
  position: relative;
}
.stab.cn { font-size: 17px; }
.stab.on {
  background: #fff;
  color: #217346;
  height: 24px;
  margin-top: -1px;
  line-height: 20px;
  border-bottom: 2px solid #217346;
  border-left: 0;
  padding: 0 13px;
}
.stab.on + .stab { border-left: 0; }
.stab.last { width: 83px; padding-right: 0; box-sizing: border-box; }
.stab.last em { color: #217346; }
.addtab { margin: 3px 0 0 7px; flex: none; }
.grip.small { margin: 5px 16px 0 17px; flex: none; height: 13px; }
.hscroll {
  display: flex;
  width: 726px;
  height: 19px;
  margin-top: 3px;
  flex: none;
  box-sizing: border-box;
}
.hbtn {
  width: 18px;
  box-sizing: border-box;
  border: 1px solid #ababab;
  background: #fff;
  display: flex;
  align-items: center;
  justify-content: center;
  flex: none;
}
.hthumb {
  width: 652px;
  box-sizing: border-box;
  border: 1px solid #ababab;
  border-left: 0;
  background: #fff;
  flex: none;
}
.htrack { flex: 1; background: #d6d6d6; }

.statusbar {
  flex: 1;
  background: #f3f3f3;
  display: flex;
  align-items: center;
  padding-left: 9px;
  font-size: 18px;
}
.mode { color: #555; }
.views {
  margin-left: 1462px;
  display: flex;
  gap: 35px;
  margin-top: -5px;
}
.zoom {
  margin-left: 25px;
  display: flex;
  align-items: center;
  color: #a6a6a6;
  margin-top: -2px;
}
.slider {
  width: 150px;
  height: 1px;
  margin: 0 6px;
  background: #a6a6a6;
  position: relative;
}
.slider i {
  position: absolute;
  left: 75px;
  top: -3px;
  width: 1px;
  height: 7px;
  background: #a6a6a6;
}
.zoom span { margin-left: 17px; }

.watermark {
  position: absolute;
  left: 1465px;
  top: 832px;
  pointer-events: none;
}
.wm { font-family: "Liberation Sans", sans-serif; }
.wm-c { font-family: "Noto Sans CJK SC", sans-serif; }
</style>
